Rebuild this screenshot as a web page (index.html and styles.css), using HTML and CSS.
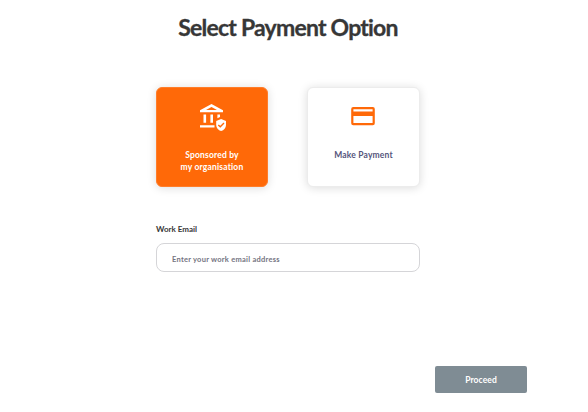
FILE: index.html
```html
<!DOCTYPE html>
<html lang="en">
<head>
<meta charset="utf-8">
<title>Select Payment Option</title>
<link rel="stylesheet" href="styles.css">
</head>
<body>
<main class="page">
  <h1 class="title">Select Payment Option</h1>
  <section class="options">
    <button class="card card-selected" type="button">
      <svg class="bank-icon" width="28" height="28" viewBox="0 0 28 28">
        <path fill="#fff" fill-rule="evenodd" d="M1 6.2 12.5 0 24 6.2V8.2H1ZM7 6H18L12.5 3Z"/>
        <path fill="#fff" d="M4.5 10.4h2.6v8.4H4.5zM11.4 10.4H14v8.4h-2.6zM18.4 10.4H21v2.7l-2.6 1.2zM1 21.2h14.5v2.4H1z"/>
        <path fill="#fff" d="m22.1 15 4.9 2.1v3.8c0 3-2 5.2-4.9 6.1-2.9-.9-4.9-3.1-4.9-6.1v-3.8Z"/>
        <path fill="none" stroke="#ff6908" stroke-width="1.4" d="m19.3 20.9 2 1.9 3.7-3.7"/>
      </svg>
      <span class="card-label">Sponsored by<br>my organisation</span>
    </button>
    <button class="card" type="button">
      <svg class="pay-icon" width="24" height="20" viewBox="0 0 24 20">
        <path fill="#ff6908" fill-rule="evenodd" d="M2.2 1h19.6a2 2 0 0 1 2 2v14.2a2 2 0 0 1-2 2H2.2a2 2 0 0 1-2-2V3a2 2 0 0 1 2-2ZM2.4 3.2v2.2h19.2V3.2ZM2.4 9.9V17h19.2V9.9Z"/>
      </svg>
      <span class="card-label">Make Payment</span>
    </button>
  </section>
  <label class="field-label" for="email">Work Email</label>
  <input class="field" id="email" type="email" placeholder="Enter your work email address">
  <button class="proceed" type="button">Proceed</button>
</main>
</body>
</html>
```
FILE: styles.css
```css
* { box-sizing: border-box; }
body { margin: 0; background: #fff; font-family: Lato, "Open Sans", sans-serif; }
.page { width: 588px; height: 412px; padding: 12px 61px 19px 156px; display: flex; flex-direction: column; }
.title { width: 264px; margin: 0; font-size: 23px; line-height: 30px; font-weight: 700; letter-spacing: -0.78px; color: #373737; -webkit-text-stroke: .3px #373737; text-align: center; white-space: nowrap; }
.options { display: flex; gap: 39px; margin-top: 45px; }
.card { width: 112px; height: 100px; padding: 16px 0 0; border: 1px solid #ececec; border-radius: 6px; background: #fff; box-shadow: 0 1px 10px rgba(0,0,0,.14); display: flex; flex-direction: column; align-items: center; justify-content: flex-start; font-family: inherit; color: #55557c; }
.card + .card { width: 113px; }
.card-selected { background: #ff6908; border-color: #ff7d2a; color: #fff; }
.bank-icon { margin-left: 1px; }
.pay-icon { margin: 2px 2px 0 0; }
.card-label { margin-top: 17px; font-size: 8.5px; line-height: 12px; font-weight: 700; letter-spacing: .18px; white-space: nowrap; }
.pay-icon + .card-label { margin-top: 23px; }
.field-label { margin-top: 36px; font-size: 8px; line-height: 12px; font-weight: 700; color: #373737; }
.field { width: 264px; height: 29px; margin-top: 8px; padding: 3px 15px 0; border: 1px solid #d5d5d8; border-radius: 8px; font: 700 7.5px/12px Lato, sans-serif; letter-spacing: .26px; }
.field::placeholder { color: #747481; opacity: 1; }
.proceed { width: 92px; height: 27px; margin-top: auto; align-self: flex-end; padding: 0; border: 0; border-radius: 2px; background: #7f8c94; color: #fff; font: 700 8.5px/12px Lato, sans-serif; letter-spacing: .1px; }
```
